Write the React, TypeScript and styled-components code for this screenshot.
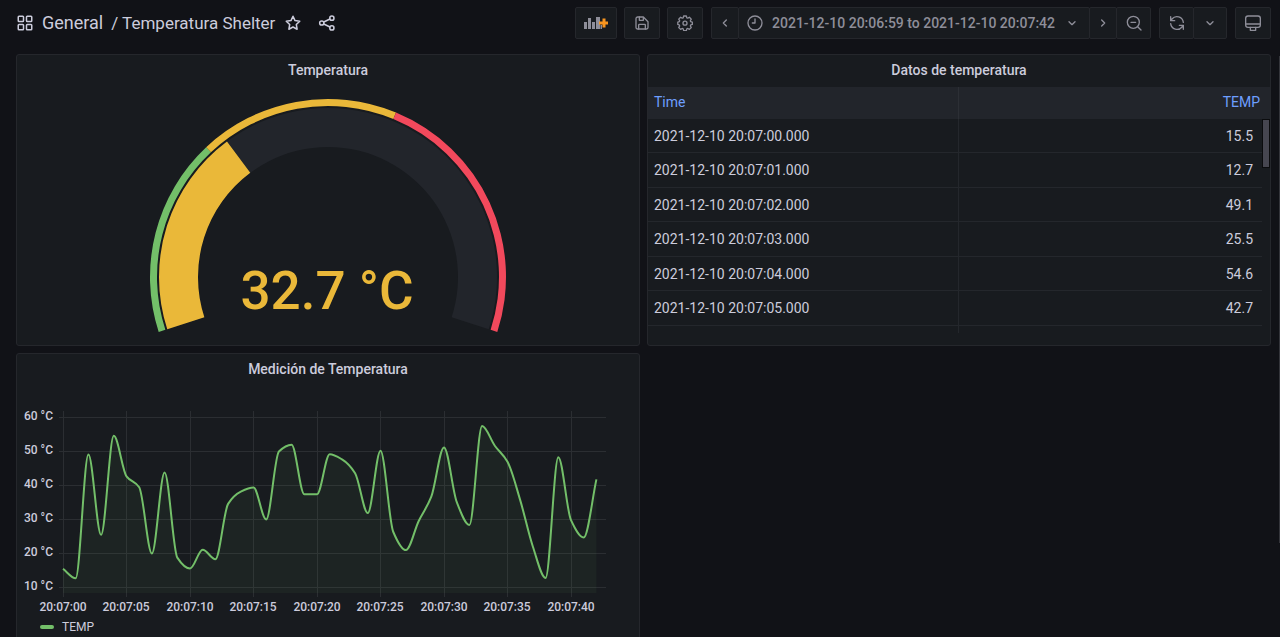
import React from 'react';
import styled, { createGlobalStyle } from 'styled-components';

const GlobalStyle = createGlobalStyle`
  *, *::before, *::after { box-sizing: border-box; }
  body {
    margin: 0;
    background: #111217;
    color: #ccccdc;
    font-family: Roboto, "Liberation Sans", sans-serif;
    font-size: 14px;
    line-height: 20px;
  }
  button { font: inherit; color: inherit; margin: 0; }
`;

const border = '#25272c';

const Shell = styled.div`
  position: relative;
  display: flex;
  flex-direction: column;
  height: 100vh;
  overflow: hidden;
`;

const PageScrollThumb = styled.div`
  position: absolute;
  top: 56px;
  right: 0;
  bottom: 94px;
  width: 1px;
  background: #34353b;
`;

const TopBar = styled.header`
  display: flex;
  align-items: center;
  justify-content: space-between;
  flex: none;
  height: 45px;
  padding: 0 9px 0 16px;
`;

const Crumbs = styled.nav`
  display: flex;
  align-items: center;
`;

const CrumbLink = styled.a<{ $size: number }>`
  margin-left: 8px;
  color: #ccccdc;
  font-size: ${(p) => p.$size}px;
  line-height: 24px;
  text-decoration: none;
  white-space: pre;
`;

const PlainButton = styled.button<{ $gap: number }>`
  display: flex;
  margin-left: ${(p) => p.$gap}px;
  padding: 0;
  border: 0;
  background: none;
`;

const Tools = styled.div`
  display: flex;
  align-items: center;
  gap: 8px;
`;

const Group = styled.div`
  display: flex;
`;

const ToolButton = styled.button<{ $width?: number }>`
  display: flex;
  align-items: center;
  justify-content: center;
  width: ${(p) => (p.$width ? `${p.$width}px` : 'auto')};
  height: 32px;
  padding: 0;
  border: 1px solid ${border};
  border-radius: 2px;
  background: #181b1f;
  color: #8e8e99;
  & + & { margin-left: -1px; }
`;

const RangeButton = styled(ToolButton)`
  gap: 9px;
  padding: 0 9px 0 8px;
  font-size: 14px;
  font-weight: 500;
  white-space: nowrap;
`;

const Board = styled.main`
  display: grid;
  grid-template-columns: 1fr 1fr;
  grid-auto-rows: 292px;
  gap: 7px;
  flex: 1;
  min-height: 0;
  padding: 9px 9px 0 16px;
  overflow: auto;
  scrollbar-width: none;
`;

const PanelBox = styled.section`
  display: flex;
  flex-direction: column;
  min-width: 0;
  border: 1px solid ${border};
  border-radius: 3px;
  background: #181b1f;
  overflow: hidden;
`;

const PanelTitle = styled.h2`
  flex: none;
  margin: 0;
  height: 32px;
  font-size: 14px;
  line-height: 30px;
  font-weight: 500;
  text-align: center;
`;

const PanelBody = styled.div`
  flex: 1;
  min-height: 0;
`;

const TableArea = styled(PanelBody)`
  position: relative;
  overflow: hidden;
  margin-bottom: 12px;
`;

const Table = styled.table`
  width: 100%;
  border-collapse: separate;
  border-spacing: 0;
  table-layout: fixed;
`;

const HeadCell = styled.th<{ $right?: boolean }>`
  height: 32px;
  padding: 0 10px 2px 6px;
  border-right: ${(p) => (p.$right ? '0' : '1px solid #2c2f35')};
  background: #22252b;
  color: #6e9fff;
  font-weight: 400;
  text-align: ${(p) => (p.$right ? 'right' : 'left')};
`;

const Cell = styled.td<{ $right?: boolean }>`
  height: 34px;
  padding: 0 17px 0 6px;
  border-right: ${(p) => (p.$right ? '0' : '1px solid #24272c')};
  border-bottom: 1px solid #24272c;
  text-align: ${(p) => (p.$right ? 'right' : 'left')};
  tr:nth-child(even) > & { height: 35px; }
`;

const ScrollTrack = styled.div`
  position: absolute;
  top: 32px;
  right: 0;
  bottom: 0;
  width: 8px;
  background: #181b1f;
`;

const ScrollThumb = styled.div`
  height: 49px;
  border: 1px solid #0b0c0e;
  background: #464650;
`;

const Drawing = styled.svg`
  display: block;
  width: 100%;
  height: 100%;
`;

const ChartBody = styled(PanelBody)`
  display: flex;
  flex-direction: column;
`;

const ChartArea = styled.div`
  flex: 1;
  min-height: 0;
`;

const Legend = styled.div`
  display: flex;
  align-items: center;
  gap: 8px;
  flex: none;
  height: 28px;
  padding: 0 23px 6px;
  font-size: 12px;
`;

const LegendMark = styled.span`
  width: 14px;
  height: 4px;
  border-radius: 2px;
  background: #73bf69;
`;

const Icon = ({ size = 16, children }: { size?: number; children: React.ReactNode }) => (
  <svg
    width={size}
    height={size}
    viewBox="0 0 24 24"
    fill="none"
    stroke="currentColor"
    strokeWidth="2"
    strokeLinecap="round"
    strokeLinejoin="round"
    aria-hidden="true"
  >
    {children}
  </svg>
);

const AppsIcon = () => (
  <Icon size={18}>
    <rect x="3" y="3" width="7" height="7" rx="1" />
    <rect x="14" y="3" width="7" height="7" rx="1" />
    <rect x="3" y="14" width="7" height="7" rx="1" />
    <rect x="14" y="14" width="7" height="7" rx="1" />
  </Icon>
);
const StarIcon = () => (
  <Icon size={18}>
    <path d="M12 3l2.7 5.8 6.3.8-4.600 4.400 1.100 6.300L12 17.300l-5.500 3 1.100-6.300L3 9.600l6.300-.8z" />
  </Icon>
);
const ShareIcon = () => (
  <Icon size={18}>
    <circle cx="18.500" cy="5.500" r="2.800" />
    <circle cx="5" cy="12" r="2.800" />
    <circle cx="18.500" cy="18.500" r="2.800" />
    <path d="M7.700 10.700l8.200-4M7.700 13.300l8.200 4" />
  </Icon>
);
const AddPanelIcon = () => (
  <svg width="24" height="14" viewBox="0 0 24 14" aria-hidden="true">
    <path
      d="M0 6h3v7H0zM4 2h3v11H4zM8 6h3v7H8zM12 1h4v12h-4zM16.500 9h1.500v4h-1.500z"
      fill="#8e8e99"
    />
    <path d="M18.500 2.500h3v3H24v3h-2.500v3h-3v-3H15v-3h3.500z" fill="#f79520" />
  </svg>
);
const SaveIcon = () => (
  <Icon>
    <path d="M5.500 3H14l7 7v8.500a2.500 2.500 0 0 1-2.500 2.500h-13A2.500 2.500 0 0 1 3 18.500v-13A2.500 2.500 0 0 1 5.500 3z" />
    <path d="M8 3v5h6V4M7 21v-6a1 1 0 0 1 1-1h8a1 1 0 0 1 1 1v6" />
  </Icon>
);
const CogIcon = () => (
  <Icon>
    <path d="M10 1.500h4l.7 2.700 1.500.6 2.400-1.400 2.800 2.800-1.400 2.400.6 1.500 2.400.7v3.400l-2.400.7-.6 1.500 1.400 2.400-2.800 2.800-2.400-1.400-1.500.6-.7 2.700h-4l-.7-2.700-1.500-.6-2.400 1.400-2.800-2.800L4 16.400l-.6-1.500-2.200-.7v-3.400l2.200-.7.6-1.500-1.400-2.400 2.800-2.800 2.400 1.400 1.500-.6z" />
    <circle cx="12" cy="12.300" r="3" />
  </Icon>
);
const ClockIcon = () => (
  <Icon>
    <circle cx="12" cy="12" r="10.500" />
    <path d="M12 6v6H8" />
  </Icon>
);
const ZoomOutIcon = () => (
  <Icon>
    <circle cx="11" cy="11" r="9" />
    <path d="M22.500 22.500l-5-5M7.500 11h7" />
  </Icon>
);
const SyncIcon = () => (
  <Icon>
    <path d="M21.500 11A9.600 9.600 0 0 0 4.500 6L2.500 8.500M2.500 2.500v6h6" />
    <path d="M2.500 13A9.600 9.600 0 0 0 19.500 18l2-2.500M21.500 21.500v-6h-6" />
  </Icon>
);
const MonitorIcon = () => (
  <Icon>
    <rect x="1" y="1.500" width="22" height="17" rx="3.500" />
    <path d="M1.500 13.500h21M8 18.500V23h8v-4.500" />
  </Icon>
);
const Chevron = ({ d }: { d: string }) => (
  <Icon>
    <path d={d} />
  </Icon>
);
const DOWN = 'M7.500 10l4.500 4.500L16.500 10';
const LEFT = 'M14 7.500L9.500 12l4.500 4.500';
const RIGHT = 'M10 7.500l4.500 4.500-4.500 4.500';

const CX = 311;
const CY = 190;
const START = -108;
const SWEEP = 216;

const point = (radius: number, degrees: number) => {
  const a = (degrees * Math.PI) / 180;
  return `${(CX + radius * Math.sin(a)).toFixed(2)} ${(CY - radius * Math.cos(a)).toFixed(2)}`;
};

const ring = (inner: number, outer: number, from: number, to: number) => {
  const a = START + SWEEP * from;
  const b = START + SWEEP * to;
  const large = b - a > 180 ? 1 : 0;
  return `M${point(outer, a)}A${outer} ${outer} 0 ${large} 1 ${point(outer, b)}L${point(inner, b)}A${inner} ${inner} 0 ${large} 0 ${point(inner, a)}Z`;
};

const GaugeValue = styled.text`
  fill: #eab839;
  font-size: 53px;
  font-weight: 500;
  text-anchor: middle;
`;

const Gauge = () => (
  <Drawing viewBox="0 0 622 258" role="img" aria-label="Temperatura 32.7 °C">
    <path d={ring(130, 169, 0, 1)} fill="#22252b" />
    <path d={ring(130, 169, 0, 0.33)} fill="#eab839" />
    <path d={ring(171, 178, 0, 0.3)} fill="#73bf69" />
    <path d={ring(171, 178, 0.3, 0.604)} fill="#eab839" />
    <path d={ring(171, 178, 0.604, 1)} fill="#f2495c" />
    <GaugeValue x="310" y="222">32.7 °C</GaugeValue>
  </Drawing>
);

const readings = [
  15.5, 12.7, 49.1, 25.5, 54.6, 42.7, 39.5, 20, 43.8, 18.8, 15.6, 21.1, 18.3, 34.6, 38.2, 39.4, 30,
  50, 52, 37.4, 37.4, 49.2, 47.6, 43.6, 31.9, 50.2, 26.4, 21, 29.5, 36.7, 51.2, 35.2, 28.4, 57.5,
  51.7, 47, 35.7, 22, 12.8, 48.3, 29.8, 24.7, 41.8,
];

const STEP = 12.7;
const xOf = (second: number) => 46 + second * STEP;
const yOf = (value: number) => 31.5 + (60 - value) * 3.4;

/* Monotone cubic interpolation, so the curve never overshoots a reading. */
const curve = (values: number[]) => {
  const ys = values.map(yOf);
  const n = ys.length;
  const slope = ys.slice(1).map((y, i) => (y - ys[i]) / STEP);
  const tangent = ys.map((_, i) => {
    if (i === 0) return slope[0];
    if (i === n - 1) return slope[n - 2];
    const a = slope[i - 1];
    const b = slope[i];
    return a * b <= 0 ? 0 : (2 * a * b) / (a + b);
  });
  let d = `M${xOf(0)} ${ys[0].toFixed(2)}`;
  for (let i = 0; i < n - 1; i += 1) {
    const third = STEP / 3;
    d += `C${(xOf(i) + third).toFixed(2)} ${(ys[i] + tangent[i] * third).toFixed(2)} ${(xOf(i + 1) - third).toFixed(2)} ${(ys[i + 1] - tangent[i + 1] * third).toFixed(2)} ${xOf(i + 1).toFixed(2)} ${ys[i + 1].toFixed(2)}`;
  }
  return d;
};

const degrees = [60, 50, 40, 30, 20, 10];
const seconds = [0, 5, 10, 15, 20, 25, 30, 35, 40];

const AxisLabel = styled.text`
  fill: #ccccdc;
  font-size: 12px;
  font-weight: 500;
`;

const Chart = () => {
  const line = curve(readings);
  return (
    <Drawing viewBox="0 0 622 230" role="img" aria-label="TEMP">
      <g stroke="#2b2e32" strokeWidth="1">
        {degrees.map((v) => (
          <path key={v} d={`M42 ${Math.floor(yOf(v)) + 0.5}H589`} />
        ))}
        {seconds.map((s) => (
          <path key={s} d={`M${Math.floor(xOf(s)) + 0.5} 25V211`} />
        ))}
      </g>
      <path d={`${line}V207H46Z`} fill="#73bf69" fillOpacity="0.06" />
      <path d={line} fill="none" stroke="#73bf69" strokeWidth="2" strokeLinejoin="round" />
      {degrees.map((v) => (
        <AxisLabel key={v} x="36" y={Math.round(yOf(v)) + 2} textAnchor="end">
          {v} °C
        </AxisLabel>
      ))}
      {seconds.map((s) => (
        <AxisLabel key={s} x={Math.floor(xOf(s))} y="225" textAnchor="middle">
          {`20:07:${String(s).padStart(2, '0')}`}
        </AxisLabel>
      ))}
    </Drawing>
  );
};

export default function App() {
  return (
    <Shell>
      <GlobalStyle />
      <TopBar>
        <Crumbs aria-label="Breadcrumb">
          <AppsIcon />
          <CrumbLink href="#general" $size={18}>General</CrumbLink>
          <CrumbLink href="#dashboard" $size={17}>/ Temperatura Shelter</CrumbLink>
          <PlainButton $gap={9} type="button" aria-label="Mark as favorite"><StarIcon /></PlainButton>
          <PlainButton $gap={16} type="button" aria-label="Share dashboard"><ShareIcon /></PlainButton>
        </Crumbs>
        <Tools>
          <ToolButton $width={42} type="button" aria-label="Add panel"><AddPanelIcon /></ToolButton>
          <ToolButton $width={36} type="button" aria-label="Save dashboard"><SaveIcon /></ToolButton>
          <ToolButton $width={36} type="button" aria-label="Dashboard settings"><CogIcon /></ToolButton>
          <Group>
            <ToolButton $width={28} type="button" aria-label="Move back"><Chevron d={LEFT} /></ToolButton>
            <RangeButton type="button">
              <ClockIcon />
              2021-12-10 20:06:59 to 2021-12-10 20:07:42
              <Chevron d={DOWN} />
            </RangeButton>
            <ToolButton $width={28} type="button" aria-label="Move forward"><Chevron d={RIGHT} /></ToolButton>
            <ToolButton $width={35} type="button" aria-label="Zoom out"><ZoomOutIcon /></ToolButton>
          </Group>
          <Group>
            <ToolButton $width={35} type="button" aria-label="Refresh"><SyncIcon /></ToolButton>
            <ToolButton $width={34} type="button" aria-label="Refresh interval"><Chevron d={DOWN} /></ToolButton>
          </Group>
          <ToolButton $width={36} type="button" aria-label="Cycle view mode"><MonitorIcon /></ToolButton>
        </Tools>
      </TopBar>
      <Board>
        <PanelBox>
          <PanelTitle>Temperatura</PanelTitle>
          <PanelBody><Gauge /></PanelBody>
        </PanelBox>
        <PanelBox>
          <PanelTitle>Datos de temperatura</PanelTitle>
          <TableArea>
            <Table>
              <thead>
                <tr>
                  <HeadCell scope="col">Time</HeadCell>
                  <HeadCell scope="col" $right>TEMP</HeadCell>
                </tr>
              </thead>
              <tbody>
                {readings.slice(0, 6).map((value, i) => (
                  <tr key={i}>
                    <Cell>{`2021-12-10 20:07:0${i}.000`}</Cell>
                    <Cell $right>{value}</Cell>
                  </tr>
                ))}
                <tr>
                  <Cell />
                  <Cell $right />
                </tr>
              </tbody>
            </Table>
            <ScrollTrack><ScrollThumb /></ScrollTrack>
          </TableArea>
        </PanelBox>
        <PanelBox>
          <PanelTitle>Medición de Temperatura</PanelTitle>
          <ChartBody>
            <ChartArea><Chart /></ChartArea>
            <Legend><LegendMark />TEMP</Legend>
          </ChartBody>
        </PanelBox>
      </Board>
      <PageScrollThumb />
    </Shell>
  );
}
